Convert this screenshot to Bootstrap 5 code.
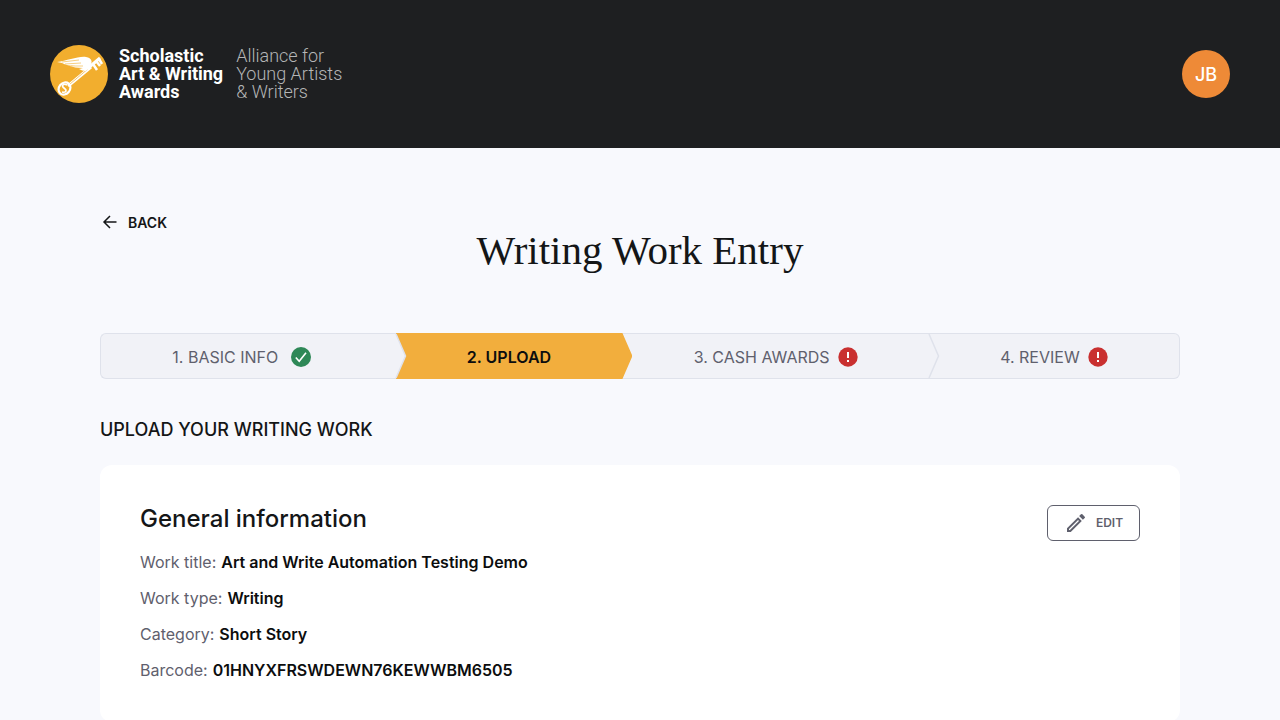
<!DOCTYPE html>
<html lang="en">
<head>
<meta charset="utf-8">
<meta name="viewport" content="width=device-width, initial-scale=1">
<title>Writing Work Entry</title>
<link rel="stylesheet" href="https://cdn.jsdelivr.net/npm/bootstrap@5.3.0/dist/css/bootstrap.min.css">
<style>
  body { background: #f8f9fd; color: #141617; font-family: Inter, sans-serif; font-size: 16px; line-height: 24px; }
  .site-header { background: #1e1f21; padding: 44px 50px 44px; }
  .brand { color: #fff; text-decoration: none; font-family: Roboto, sans-serif; font-size: 18px; line-height: 18px; }
  .brand-name { font-weight: 700; margin-left: 11px; }
  .brand-org { font-weight: 300; color: #b4b5b6; margin-left: 13px; }
  .avatar { width: 48px; height: 48px; background: #ee8a37; color: #fff; font-size: 18px; font-weight: 500; }
  .page { padding: 65px 100px 0; }
  .back-link { color: #141617; font-size: 14px; font-weight: 600; line-height: 20px; }
  .page-title { font-family: "Liberation Serif", serif; font-size: 41px; line-height: 48px; font-weight: 400; margin: -13px 0 59px; }
  .steps { height: 46px; }
  .step { border: solid #dfe2eb; border-width: 1px 0; background: #f1f2f7; color: #5f606d; }
  .step:first-child { border-left-width: 1px; border-radius: 6px 0 0 6px; }
  .step:last-child { border-right-width: 1px; border-radius: 0 6px 6px 0; }
  .step a { color: inherit; padding-top: 2px; }
  .step .done-icon { margin: 0 13px; }
  .step.current { color: #0c0d0e; font-weight: 600; z-index: 1; }
  .step.current::before { content: ""; position: absolute; inset: -1px -10px -1px 0; background: #f2ae3d; clip-path: polygon(0 0, calc(100% - 10px) 0, 100% 50%, calc(100% - 10px) 100%, 0 100%, 10px 50%); }
  .chevron { position: absolute; top: 0; left: 100%; z-index: 2; overflow: visible; }
  .section-title { font-size: 18px; line-height: 24px; font-weight: 500; margin: 39px 0 23px; }
  .panel { background: #fff; border-radius: 12px; padding: 40px; }
  .panel h2 { font-size: 24px; line-height: 28px; font-weight: 500; margin-bottom: 17px; }
  .edit-btn { --bs-btn-color: #5f606d; --bs-btn-border-color: #5f606d; --bs-btn-hover-color: #fff; --bs-btn-hover-bg: #5f606d; width: 93px; height: 36px; font-size: 12px; font-weight: 600; border-radius: 6px; }
  .facts { color: #5f606d; row-gap: 12px; }
  .facts dt { font-weight: 400; }
  .facts dd { color: #0c0d0e; font-weight: 600; }
  .fact { column-gap: 5px; }
</style>
</head>
<body>
<header class="site-header d-flex justify-content-between align-items-center">
  <a class="brand d-flex align-items-center" href="#">
    <svg width="58" height="60" viewBox="0 0 58 60" aria-hidden="true">
      <circle cx="29" cy="30" r="29" fill="#f2ae2e"/>
      <g fill="none" stroke="#fff">
        <path d="M18 42 41 23" stroke-width="3"/>
        <path d="M20 40 39 24" stroke="#f2ae2e" stroke-width=".7"/>
        <ellipse cx="14.500" cy="44.500" rx="5.500" ry="6.500" transform="rotate(40 14.500 44.500)" stroke-width="2.200"/>
        <path d="M17 41c-4-2-6 1-3 3s3 5-2 4" stroke-width="1.700"/>
        <path d="M37 25 50 14" stroke-width="3"/>
        <path d="m43 20 4 6m-1-9 4 5m-1-7 3 5" stroke-width="2.500"/>
      </g>
      <path d="M7 18c10-1 21-6 29-5 6 1 7 5 4 9l-4 5c-3 0-5-1-7-2l4-1c-6 0-10-1-13-2h6c-6 0-11-1-14-3h7c-5 0-9 0-12-1Z" fill="#fff"/>
      <path d="m12 18 17-2m-14 4 16-1m-10 3 12 0" stroke="#f2ae2e" stroke-width=".6"/>
    </svg>
    <span class="brand-name">Scholastic<br>Art &amp; Writing<br>Awards</span>
    <span class="brand-org">Alliance for<br>Young Artists<br>&amp; Writers</span>
  </a>
  <button class="avatar btn border-0 p-0 rounded-circle" type="button" aria-label="Account menu">JB</button>
</header>

<main class="page">
  <a class="back-link d-inline-flex align-items-center gap-2 text-decoration-none" href="#">
    <svg width="20" height="20" viewBox="0 0 20 20" fill="none" stroke="currentColor" stroke-width="1.500" aria-hidden="true"><path d="M16.500 9H4m6-6-6 6 6 6"/></svg>
    BACK
  </a>
  <h1 class="page-title text-center">Writing Work Entry</h1>

  <ol class="steps d-flex list-unstyled mb-0">
    <li class="step d-flex flex-grow-1 position-relative">
      <a class="d-flex flex-grow-1 justify-content-center align-items-center text-decoration-none" href="#">1. BASIC INFO
        <svg class="done-icon" width="20" height="20" viewBox="0 0 20 20" aria-label="Complete"><circle cx="10" cy="10" r="10" fill="#2e8857"/><path d="m4.800 10.500 3.400 3.700L15 5.800" fill="none" stroke="#fff" stroke-width="1.600"/></svg>
      </a>
      <svg class="chevron" width="10" height="44" viewBox="0 0 10 44" fill="none" stroke="#dfe2eb" stroke-width="1.500" aria-hidden="true"><path d="m0 0 9.500 22L0 44"/></svg>
    </li>
    <li class="step current d-flex flex-grow-1 position-relative" aria-current="step">
      <a class="d-flex flex-grow-1 justify-content-center align-items-center text-decoration-none position-relative" href="#">2. UPLOAD</a>
    </li>
    <li class="step d-flex flex-grow-1 position-relative">
      <a class="d-flex flex-grow-1 justify-content-center align-items-center text-decoration-none gap-2" href="#">3. CASH AWARDS
        <svg width="20" height="20" viewBox="0 0 20 20" aria-label="Needs attention"><circle cx="10" cy="10" r="9.700" fill="#c93030"/><path d="M10 5v6m0 2v2" stroke="#fff" stroke-width="2"/></svg>
      </a>
      <svg class="chevron" width="10" height="44" viewBox="0 0 10 44" fill="none" stroke="#dfe2eb" stroke-width="1.500" aria-hidden="true"><path d="m0 0 9.500 22L0 44"/></svg>
    </li>
    <li class="step d-flex flex-grow-1 position-relative">
      <a class="d-flex flex-grow-1 justify-content-center align-items-center text-decoration-none gap-2" href="#">4. REVIEW
        <svg width="20" height="20" viewBox="0 0 20 20" aria-label="Needs attention"><circle cx="10" cy="10" r="9.700" fill="#c93030"/><path d="M10 5v6m0 2v2" stroke="#fff" stroke-width="2"/></svg>
      </a>
    </li>
  </ol>

  <h2 class="section-title">UPLOAD YOUR WRITING WORK</h2>

  <section class="panel d-flex justify-content-between align-items-start">
    <div>
      <h2>General information</h2>
      <dl class="facts d-grid mb-0">
        <div class="fact d-flex"><dt>Work title:</dt><dd class="mb-0">Art and Write Automation Testing Demo</dd></div>
        <div class="fact d-flex"><dt>Work type:</dt><dd class="mb-0">Writing</dd></div>
        <div class="fact d-flex"><dt>Category:</dt><dd class="mb-0">Short Story</dd></div>
        <div class="fact d-flex"><dt>Barcode:</dt><dd class="mb-0">01HNYXFRSWDEWN76KEWWBM6505</dd></div>
      </dl>
    </div>
    <button class="edit-btn btn p-0 d-flex justify-content-center align-items-center gap-2" type="button">
      <svg width="24" height="24" viewBox="0 0 24 24" fill="currentColor" aria-hidden="true"><path d="M3 17.250V21h3.750L17.810 9.940l-3.750-3.750L3 17.250ZM5.920 19H5v-.920l9.060-9.060.920.920L5.920 19ZM20.710 7.040a1 1 0 0 0 0-1.410l-2.340-2.340a1 1 0 0 0-1.410 0l-1.830 1.830 3.750 3.750 1.830-1.830Z"/></svg>
      EDIT
    </button>
  </section>
</main>
<script src="https://cdn.jsdelivr.net/npm/bootstrap@5.3.0/dist/js/bootstrap.bundle.min.js"></script>
</body>
</html>
